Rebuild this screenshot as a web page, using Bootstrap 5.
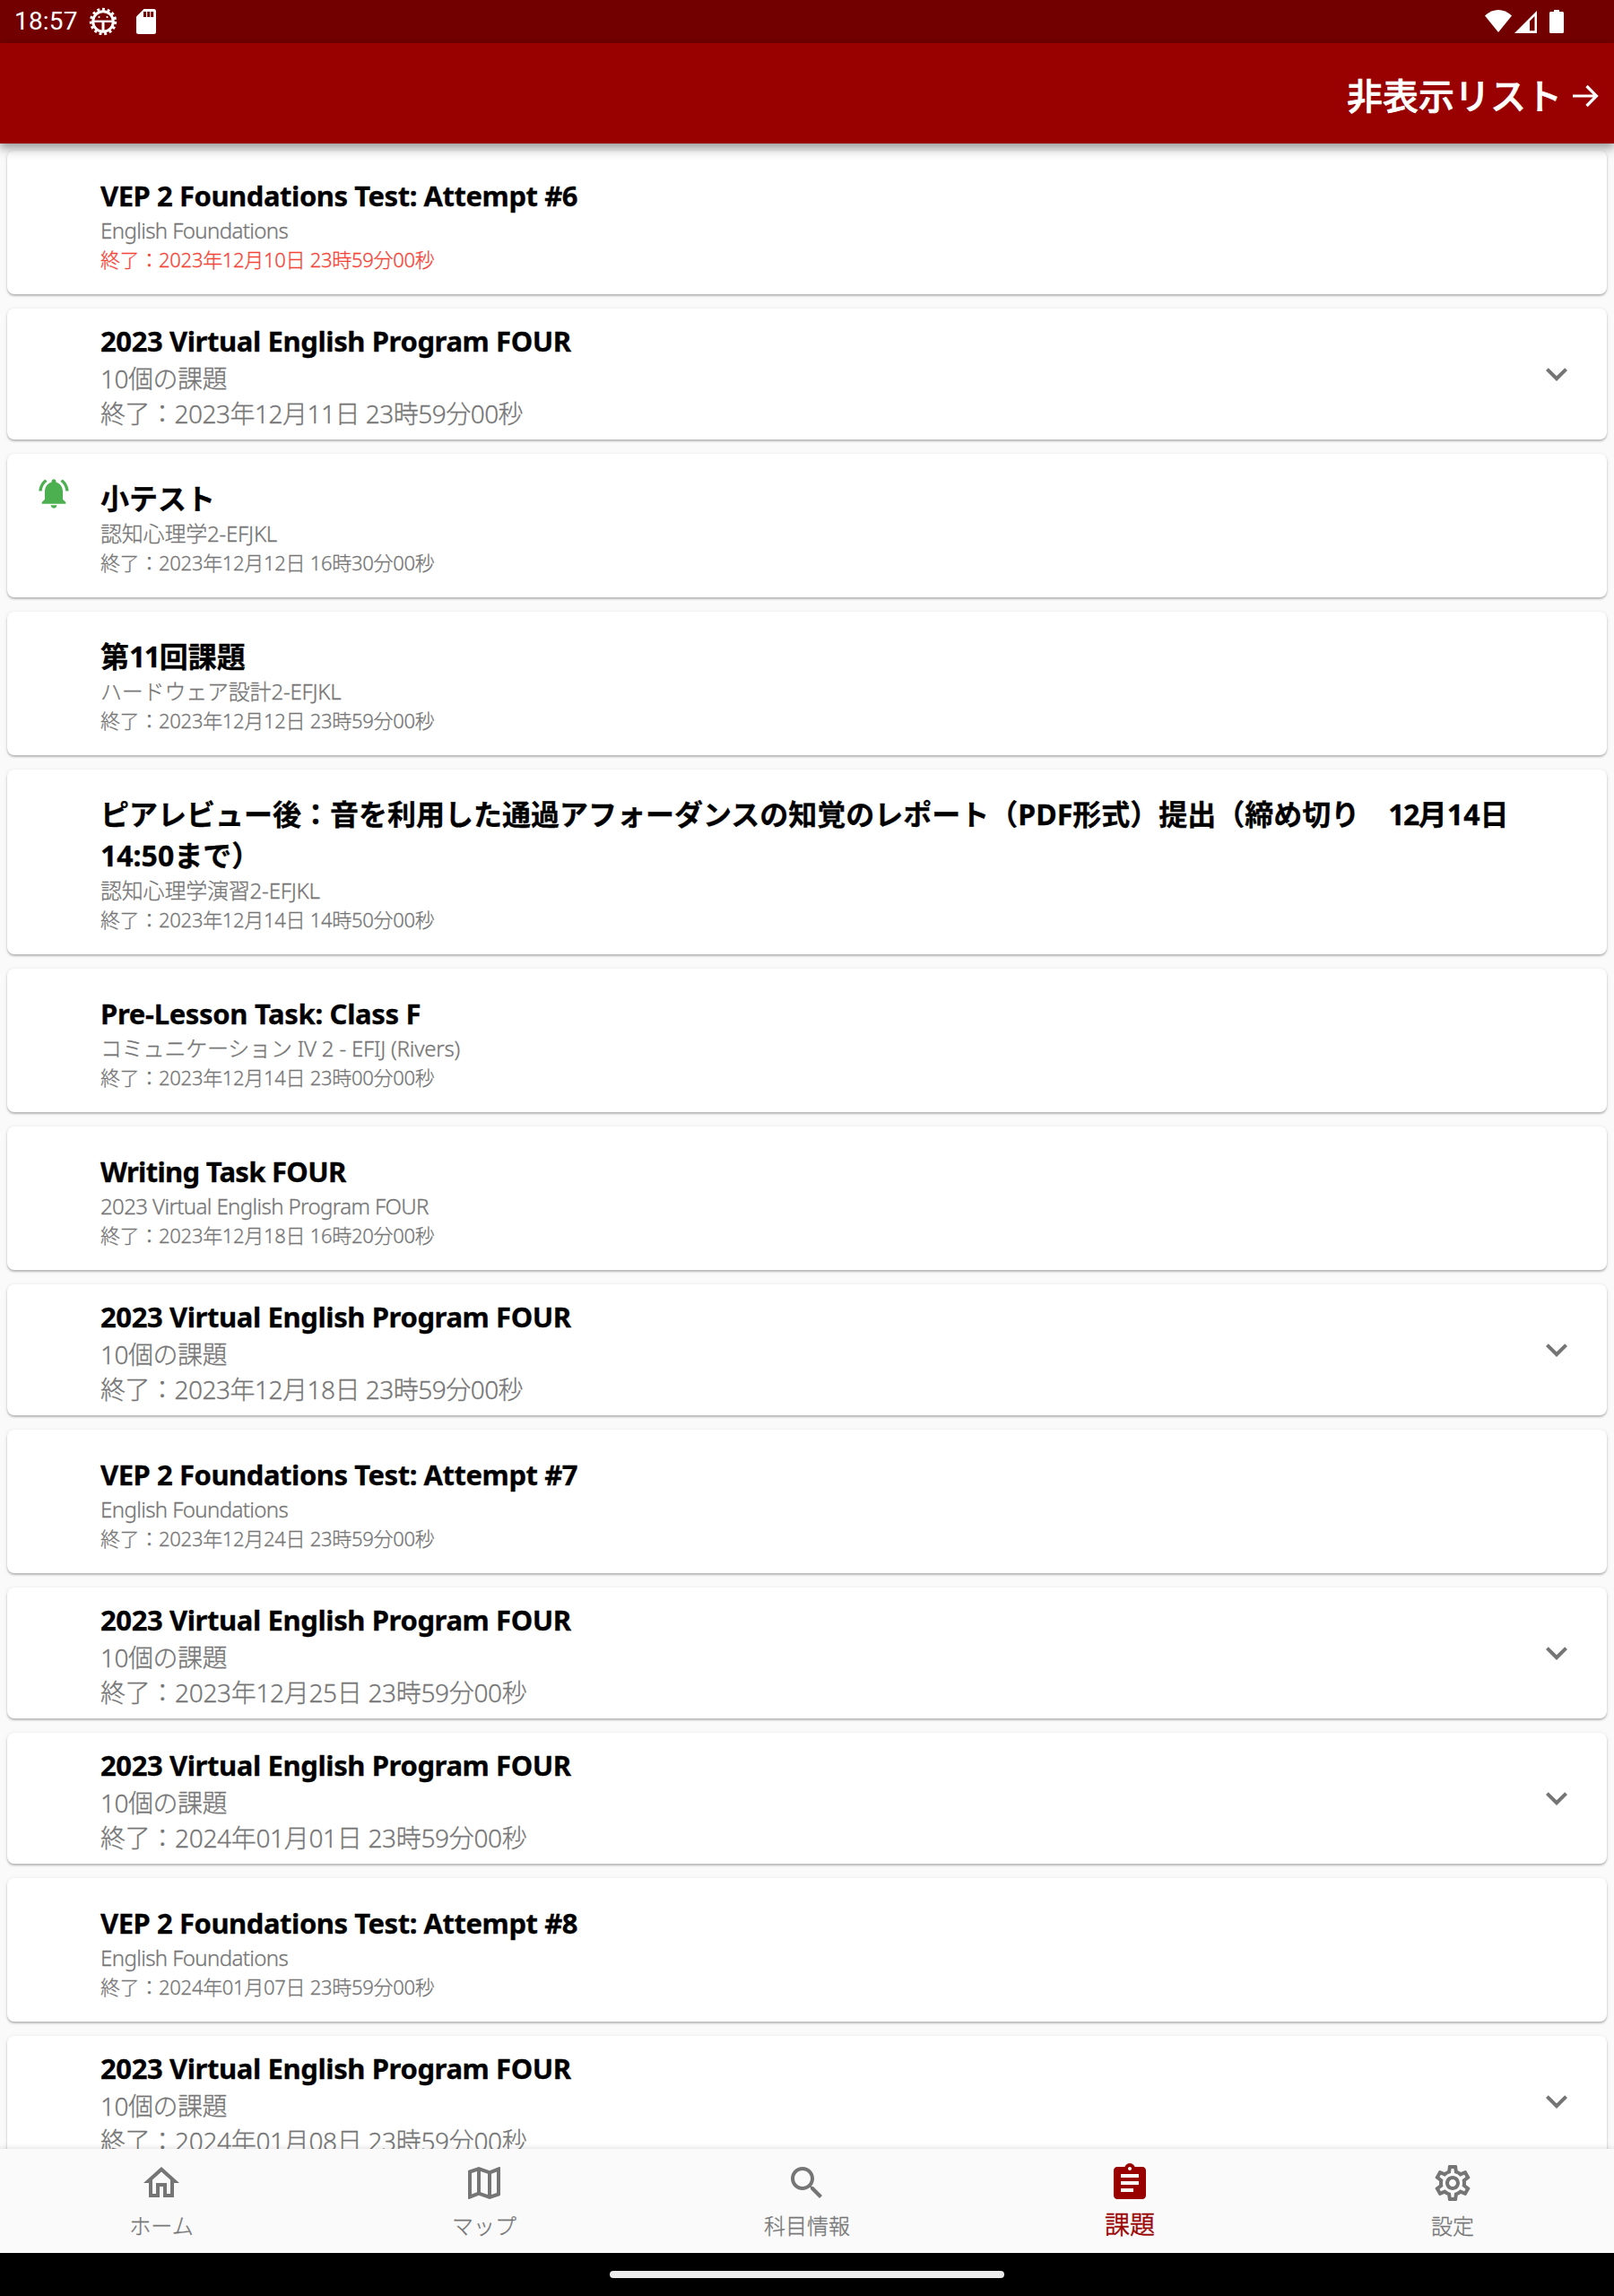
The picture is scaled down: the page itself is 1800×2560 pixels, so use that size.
<!DOCTYPE html>
<html lang="ja">
<head>
<meta charset="utf-8">
<meta name="viewport" content="width=device-width, initial-scale=1">
<title>課題</title>
<link rel="stylesheet" href="https://cdn.jsdelivr.net/npm/bootstrap@5.3.0/dist/css/bootstrap.min.css">
<style>
body{background:#fafafa;font-family:"Noto Sans","Noto Sans CJK JP",sans-serif;height:2560px}
.status-bar{height:48px;background:#730000;font:28px/50px Roboto,sans-serif;letter-spacing:.2px;padding:0 56px 0 16px;flex:none}
.status-bar svg{display:block}
.app-bar{height:112px;background:#900;box-shadow:0 4px 8px rgba(0,0,0,.22),0 8px 12px rgba(0,0,0,.14),0 2px 16px rgba(0,0,0,.1);padding:2px 17px 0 0;flex:none;position:relative;z-index:2}
.app-bar a{font-size:40px;line-height:60px;font-family:"Noto Sans CJK JP",sans-serif;font-weight:500;-webkit-text-stroke:.7px #fff}
.task-list{padding:8px 8px 0;gap:16px;min-height:0}
.task{border:0;border-radius:8px;padding:27px 90px 0 104px;height:160px;flex:none;box-shadow:0 2px 2px rgba(0,0,0,.2),0 1px 4px rgba(0,0,0,.12);color:#757575;position:relative}
.task.tall{height:206px}
.task.group{height:146px;padding-top:13px}
.task h2{font-size:32px;line-height:46px;font-weight:700;color:#000;margin:0 0 -1px;-webkit-text-stroke:.3px #000}
.task h2.latin{font-size:31px;letter-spacing:-.45px}
.task.group h2.latin{letter-spacing:-.4px}
.task h2.tight{letter-spacing:-.7px}
.task h2.loose{letter-spacing:-.32px}
.pair{letter-spacing:-1.5px}
.course{font-size:24px;line-height:34px;font-weight:300;letter-spacing:-.2px;-webkit-text-stroke:.3px currentColor}
.course.latin{letter-spacing:-.6px}
.due{font-size:22px;line-height:32px;font-weight:300;letter-spacing:-.3px;margin-top:-1px;-webkit-text-stroke:.3px currentColor}
.group .course,.group .due{font-size:28px;line-height:40px;letter-spacing:-.5px}
.group .due.wide{letter-spacing:-.32px}
.late{color:#f44336}
.bell{position:absolute;left:32px;top:24px}
.more{position:absolute;right:32px;top:49px}
.bottom-nav{height:116px;background:#fafafa;box-shadow:0 -1px 6px rgba(0,0,0,.12);flex:none;position:relative;z-index:2}
.bottom-nav a{flex:1 1 0;padding-top:14px;font-size:24px;line-height:36px;font-weight:300;font-family:"Noto Sans CJK JP",sans-serif;color:#757575;text-decoration:none}
.bottom-nav a span{margin-top:5px;-webkit-text-stroke:.3px currentColor}
.bottom-nav a.active{color:#900;font-size:28px}
.bottom-nav a.active span{margin-top:3px;-webkit-text-stroke-width:.6px}
.gesture{height:48px;background:#000;flex:none}
.gesture div{width:440px;height:8px;border-radius:4px;background:#ececec}
</style>
<script src="https://cdn.jsdelivr.net/npm/bootstrap@5.3.0/dist/js/bootstrap.bundle.min.js"></script>
</head>
<body class="d-flex flex-column overflow-hidden">
<svg class="d-none">
<symbol id="chev" viewBox="0 0 24 24"><path fill="currentColor" d="M16.59 8.59 12 13.17 7.41 8.59 6 10l6 6 6-6z"/></symbol>
</svg>

<div class="status-bar d-flex align-items-center text-white">
  <span>18:57</span>
  <svg style="margin-left:12px" width="32" height="32" viewBox="-16 -16 32 32" fill="none" stroke="#fff">
    <circle r="11.3" stroke-width="3"/>
    <circle r="13.500" stroke-width="3.400" stroke-dasharray="2.900 2.755"/>
    <path d="M-11-.2H11" stroke-width="2.400"/><path d="M0 1v11" stroke-width="3"/>
    <circle cx="-4.500" cy="-5" r="1.100" fill="#fff" stroke="none"/><circle cx="4.500" cy="-5" r="1.100" fill="#fff" stroke="none"/>
  </svg>
  <svg style="margin-left:21px" width="22" height="28" viewBox="0 0 22 28"><path fill="#fff" d="M8.500 0H19.500Q22 0 22 2.500V25.500Q22 28 19.500 28H2.500Q0 28 0 25.500V8.500z"/><path stroke="#730000" stroke-width="3" d="M9.500 3v6M13.700 3v6M17.700 3v6"/></svg>
  <svg class="ms-auto" width="88" height="28" viewBox="0 0 88 28" fill="#fff">
    <path d="M0 7.500Q15-5.300 30 7.500L15 26z"/>
    <path fill-rule="evenodd" d="M58 2V27H33zM55.500 8L50 13.500V24.300H55.500z"/>
    <path d="M77 1h6v2h3.500q1.500 0 1.500 1.500v21q0 1.500-1.500 1.500h-13q-1.500 0-1.500-1.500v-21Q72 3 73.500 3H77z"/>
  </svg>
</div>

<header class="app-bar d-flex align-items-center justify-content-end text-white">
  <a class="text-white text-decoration-none">非表示リスト</a>
  <svg style="margin:3px 0 0 11px" width="30" height="26" viewBox="0 0 30 26" fill="none" stroke="#fff" stroke-width="3.200"><path d="M1 13H27M16.500 2 27.500 13 16.500 24"/></svg>
</header>

<main class="task-list d-flex flex-column flex-fill overflow-hidden">
  <article class="task card"><h2 class="latin">VEP 2 Foundations Test: Attempt #6</h2><div class="course latin">English Foundations</div><div class="due late">終了：2023年12月10日 23時59分00秒</div></article>
  <article class="task card group"><h2 class="latin">2023 Virtual English Program FOUR</h2><div class="course">10個の課題</div><div class="due">終了：2023年12月11日 23時59分00秒</div><svg class="more" width="48" height="48"><use href="#chev"/></svg></article>
  <article class="task card">
    <svg class="bell" width="40" height="40" viewBox="0 0 24 24" fill="#4caf50"><path d="M7.580 4.080 6.150 2.650C3.750 4.480 2.170 7.300 2.030 10.500h2c.15-2.650 1.510-4.970 3.550-6.420zM19.970 10.500h2c-.15-3.200-1.730-6.020-4.120-7.850l-1.420 1.430c2.020 1.450 3.390 3.770 3.540 6.420zM18 11c0-3.070-1.640-5.640-4.500-6.320V4c0-.83-.67-1.500-1.500-1.500s-1.500.67-1.500 1.500v.68C7.630 5.360 6 7.920 6 11v5l-2 2v1h16v-1l-2-2zM12 22c.14 0 .27-.01.4-.04.65-.14 1.180-.58 1.440-1.180.1-.24.15-.5.15-.78h-4c.01 1.100.9 2 2.010 2z"/></svg>
    <h2>小テスト</h2><div class="course">認知心理学2-EFJKL</div><div class="due">終了：2023年12月12日 16時30分00秒</div></article>
  <article class="task card"><h2>第<span class="pair">11</span>回課題</h2><div class="course">ハードウェア設計2-EFJKL</div><div class="due">終了：2023年12月12日 23時59分00秒</div></article>
  <article class="task card tall"><h2>ピアレビュー後：音を利用した通過アフォーダンスの知覚のレポート（PDF形式）提出（締め切り　<span class="pair">12</span>月14日<br>14:50まで）</h2><div class="course">認知心理学演習2-EFJKL</div><div class="due">終了：2023年12月14日 14時50分00秒</div></article>
  <article class="task card"><h2 class="latin loose">Pre-Lesson Task: Class F</h2><div class="course">コミュニケーション IV 2 - EFIJ (Rivers)</div><div class="due">終了：2023年12月14日 23時00分00秒</div></article>
  <article class="task card"><h2 class="latin tight">Writing Task FOUR</h2><div class="course latin">2023 Virtual English Program FOUR</div><div class="due">終了：2023年12月18日 16時20分00秒</div></article>
  <article class="task card group"><h2 class="latin">2023 Virtual English Program FOUR</h2><div class="course">10個の課題</div><div class="due">終了：2023年12月18日 23時59分00秒</div><svg class="more" width="48" height="48"><use href="#chev"/></svg></article>
  <article class="task card"><h2 class="latin">VEP 2 Foundations Test: Attempt #7</h2><div class="course latin">English Foundations</div><div class="due">終了：2023年12月24日 23時59分00秒</div></article>
  <article class="task card group"><h2 class="latin">2023 Virtual English Program FOUR</h2><div class="course">10個の課題</div><div class="due wide">終了：2023年12月25日 23時59分00秒</div><svg class="more" width="48" height="48"><use href="#chev"/></svg></article>
  <article class="task card group"><h2 class="latin">2023 Virtual English Program FOUR</h2><div class="course">10個の課題</div><div class="due wide">終了：2024年01月01日 23時59分00秒</div><svg class="more" width="48" height="48"><use href="#chev"/></svg></article>
  <article class="task card"><h2 class="latin">VEP 2 Foundations Test: Attempt #8</h2><div class="course latin">English Foundations</div><div class="due">終了：2024年01月07日 23時59分00秒</div></article>
  <article class="task card group"><h2 class="latin">2023 Virtual English Program FOUR</h2><div class="course">10個の課題</div><div class="due wide">終了：2024年01月08日 23時59分00秒</div><svg class="more" width="48" height="48"><use href="#chev"/></svg></article>
</main>

<nav class="bottom-nav d-flex">
  <a class="d-flex flex-column align-items-center" href="#"><svg width="48" height="48" viewBox="0 0 24 24" fill="currentColor"><path d="m12 5.690 5 4.500V18h-2v-6H9v6H7v-7.810l5-4.500M12 3 2 12h3v8h6v-6h2v6h6v-8h3z"/></svg><span>ホーム</span></a>
  <a class="d-flex flex-column align-items-center" href="#"><svg width="48" height="48" viewBox="0 0 24 24" fill="currentColor"><path d="m20.500 3-.16.03L15 5.100 9 3 3.360 4.900c-.21.07-.36.25-.36.48V20.500c0 .28.22.5.5.5l.16-.03L9 18.900l6 2.100 5.640-1.900c.21-.07.36-.25.36-.48V3.500c0-.28-.22-.5-.5-.5zM10 5.470l4 1.400v11.660l-4-1.400V5.470zm-5 .99 3-1.010v11.700l-3 1.160V6.460zm14 11.080-3 1.010V6.860l3-1.160v11.840z"/></svg><span>マップ</span></a>
  <a class="d-flex flex-column align-items-center" href="#"><svg width="48" height="48" viewBox="0 0 24 24" fill="currentColor"><path d="M15.500 14h-.79l-.28-.27C15.410 12.590 16 11.110 16 9.500 16 5.910 13.090 3 9.500 3S3 5.910 3 9.500 5.910 16 9.500 16c1.610 0 3.090-.59 4.230-1.570l.27.28v.79l5 4.990L20.490 19l-4.990-5zm-6 0C7.010 14 5 11.990 5 9.500S7.010 5 9.500 5 14 7.010 14 9.500 11.990 14 9.500 14z"/></svg><span>科目情報</span></a>
  <a class="active d-flex flex-column align-items-center" href="#"><svg width="48" height="48" viewBox="0 0 24 24" fill="currentColor"><path d="M19 3h-4.180C14.400 1.840 13.300 1 12 1c-1.300 0-2.400.84-2.820 2H5c-1.100 0-2 .9-2 2v14c0 1.100.9 2 2 2h14c1.100 0 2-.9 2-2V5c0-1.100-.9-2-2-2zm-7 0c.55 0 1 .45 1 1s-.45 1-1 1-1-.45-1-1 .45-1 1-1zm2 14H7v-2h7v2zm3-4H7v-2h10v2zm0-4H7V7h10v2z"/></svg><span>課題</span></a>
  <a class="d-flex flex-column align-items-center" href="#"><svg width="48" height="48" viewBox="0 0 24 24" fill="currentColor"><path d="M19.430 12.980c.04-.32.07-.64.07-.98 0-.34-.03-.66-.07-.98l2.110-1.650c.19-.15.24-.42.12-.64l-2-3.460c-.09-.16-.26-.25-.44-.25-.06 0-.12.01-.17.03l-2.490 1c-.52-.4-1.080-.73-1.690-.98l-.38-2.650C14.460 2.180 14.250 2 14 2h-4c-.25 0-.46.18-.49.42l-.38 2.650c-.61.25-1.170.59-1.690.98l-2.490-1c-.06-.02-.12-.03-.18-.03-.17 0-.34.09-.43.25l-2 3.460c-.13.22-.07.49.12.64l2.110 1.650c-.04.32-.07.65-.07.98 0 .33.03.66.07.98l-2.110 1.650c-.19.15-.24.42-.12.64l2 3.460c.09.16.26.25.44.25.06 0 .12-.01.17-.03l2.490-1c.52.4 1.080.73 1.690.98l.38 2.650c.03.24.24.42.49.42h4c.25 0 .46-.18.49-.42l.38-2.650c.61-.25 1.170-.59 1.690-.98l2.490 1c.06.02.12.03.18.03.17 0 .34-.09.43-.25l2-3.460c.12-.22.07-.49-.12-.64l-2.110-1.650zm-1.980-1.710c.04.31.05.52.05.73 0 .21-.02.43-.05.73l-.14 1.130.89.7 1.080.84-.7 1.210-1.270-.51-1.040-.42-.9.68c-.43.32-.84.56-1.250.73l-1.060.43-.16 1.130-.2 1.350h-1.400l-.19-1.350-.16-1.130-1.060-.43c-.43-.18-.83-.41-1.230-.71l-.91-.7-1.060.43-1.270.51-.7-1.210 1.080-.84.89-.7-.14-1.130c-.03-.31-.05-.54-.05-.74s.02-.43.05-.73l.14-1.130-.89-.7-1.080-.84.7-1.210 1.270.51 1.040.42.9-.68c.43-.32.84-.56 1.250-.73l1.060-.43.16-1.130.2-1.350h1.390l.19 1.350.16 1.130 1.060.43c.43.18.83.41 1.230.71l.91.7 1.060-.43 1.270-.51.7 1.210-1.070.85-.89.7.14 1.130zM12 8c-2.210 0-4 1.790-4 4s1.790 4 4 4 4-1.790 4-4-1.790-4-4-4zm0 6c-1.100 0-2-.9-2-2s.9-2 2-2 2 .9 2 2-.9 2-2 2z"/></svg><span>設定</span></a>
</nav>
<div class="gesture d-flex justify-content-center align-items-center"><div></div></div>
</body>
</html>
